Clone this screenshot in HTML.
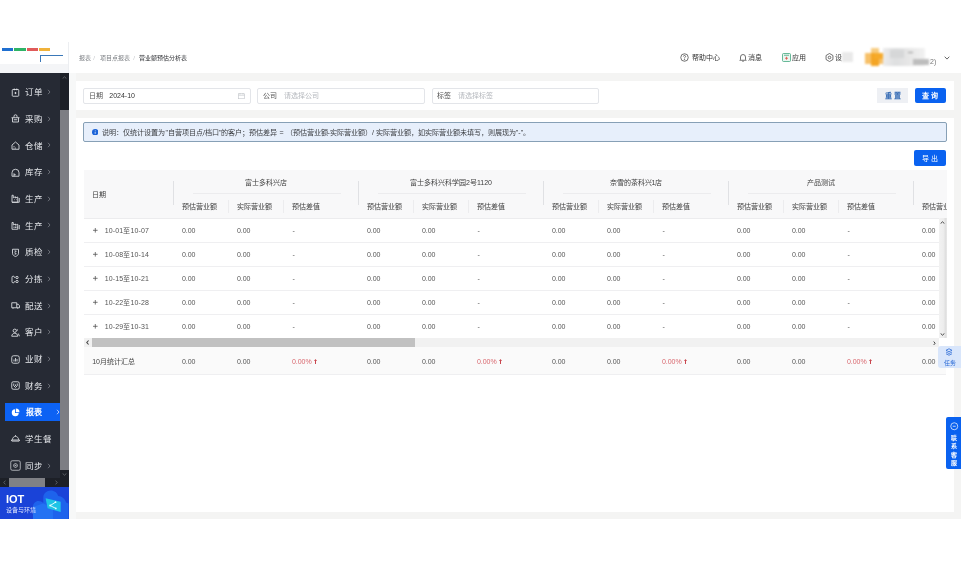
<!DOCTYPE html>
<html lang="zh-CN"><head><meta charset="utf-8">
<style>
*{box-sizing:border-box;margin:0;padding:0}
html,body{width:961px;height:561px;overflow:hidden;background:#fff;-webkit-font-smoothing:antialiased;font-family:"Liberation Sans",sans-serif;}
.abs{position:absolute}
#app{will-change:transform;position:absolute;left:0;top:40px;width:961px;height:479px;background:#f4f4f3;overflow:hidden}
/* header */
#hdr{position:absolute;left:0;top:0;width:961px;height:33px;background:#fff}
#logo{position:absolute;left:0;top:0;width:68px;height:33px;background:#fff}
#side{position:absolute;left:0;top:33px;width:68.5px;height:446px;background:#262a34;overflow:hidden}
.mi{position:absolute;left:0;width:60px;height:18px;color:#e6e8ec;font-size:8px;line-height:18px}
.mi .ic{position:absolute;left:11px;top:4.7px;width:9px;height:9px}
.mi .tx{position:absolute;left:25px;top:0.2px;font-size:8.5px}
.mi.act{left:4.5px;width:55.2px;background:#0c62f4;color:#fff;font-weight:bold}
.mi.act .ic{left:6.5px}
.mi.act .tx{left:21.3px;font-size:8px;top:.5px}
.mi.act .ar{left:51px}
.mi .ar{position:absolute;left:47px;top:6px;width:4px;height:6px}
.bc{top:13px;font-size:6px;line-height:10px;white-space:nowrap}
.hr{top:12.8px;font-size:7px;line-height:10px;color:#333;white-space:nowrap}
.btn{font-size:7px;line-height:15.7px;padding-top:.8px;text-align:center;font-weight:500;white-space:nowrap}
.card{position:absolute;background:#fff}
.inp{position:absolute;top:6.5px;height:16px;border:1px solid #e3e5e9;border-radius:2px;font-size:7px;line-height:14px;color:#444}
.inp .lb{position:absolute;left:4.6px;top:.9px;color:#555}
.inp .ph{position:absolute;top:.9px;color:#b5b8bd}
.th{position:absolute;font-size:7px;color:#3c3c3c;line-height:10px;white-space:nowrap;margin-top:.9px}
.td{position:absolute;font-size:7px;color:#555;line-height:10px;white-space:nowrap;margin-top:.9px}
</style></head>
<body>
<div id="app">
  <div id="hdr">
    <div id="logo">
      <div class="abs" style="left:2px;top:7.5px;width:11.3px;height:3.4px;background:#1f6fd0"></div>
      <div class="abs" style="left:13.8px;top:7.5px;width:12px;height:3.4px;background:#2fb366"></div>
      <div class="abs" style="left:26.6px;top:7.5px;width:11.3px;height:3.4px;background:#e05a5a"></div>
      <div class="abs" style="left:38.6px;top:7.5px;width:11.7px;height:3.4px;background:#f0b23a"></div>
      <div class="abs" style="left:40px;top:15px;width:22.6px;height:1.4px;background:#3a78b8"></div>
      <div class="abs" style="left:40px;top:15px;width:1.4px;height:7px;background:#3a78b8"></div>
      <div class="abs" style="left:0;top:24.4px;width:68px;height:8.6px;background:#f4f5f7"></div>
    </div>
    <div class="abs" style="left:68px;top:2px;width:1px;height:31px;background:#eceef1"></div>
    <span class="abs bc" style="left:79px;color:#7d8085">报表</span>
    <span class="abs bc" style="left:93.2px;color:#c4c6ca">/</span>
    <span class="abs bc" style="left:99.6px;color:#7d8085">项目点报表</span>
    <span class="abs bc" style="left:133.2px;color:#c4c6ca">/</span>
    <span class="abs bc" style="left:139px;color:#303236">营业额预估分析表</span>
    <svg class="abs" style="left:679.5px;top:12.5px;width:9px;height:9px" viewBox="0 0 18 18" fill="none" stroke="#444" stroke-width="1.5"><circle cx="9" cy="9" r="7.5"/><path d="M6.8 7a2.2 2.2 0 1 1 3.2 2c-.7.4-1 .8-1 1.6" /><circle cx="9" cy="13.2" r=".5" fill="#444"/></svg>
    <span class="abs hr" style="left:691.5px">帮助中心</span>
    <svg class="abs" style="left:738.5px;top:12.5px;width:8px;height:9px" viewBox="0 0 16 18" fill="none" stroke="#444" stroke-width="1.5"><path d="M3 13V8a5 5 0 0 1 10 0v5l1.5 1.5h-13z"/><path d="M6.5 16.5h3"/></svg>
    <span class="abs hr" style="left:748px">消息</span>
    <svg class="abs" style="left:781.5px;top:12.5px;width:9px;height:9px" viewBox="0 0 18 18"><rect x="1" y="1" width="16" height="16" rx="2" fill="#eaf7f1" stroke="#3aa37a" stroke-width="1.5"/><path d="M4 4.5h10" stroke="#3aa37a" stroke-width="1.5"/><path d="M9 7.5v6M6 10.5h6" stroke="#e0504a" stroke-width="1.6"/></svg>
    <span class="abs hr" style="left:791.5px">应用</span>
    <svg class="abs" style="left:824.5px;top:12.5px;width:9px;height:9px" viewBox="0 0 18 18" fill="none" stroke="#444" stroke-width="1.5"><path d="M9 1l6.9 4v8L9 17l-6.9-4V5z"/><circle cx="9" cy="9" r="2.6"/></svg>
    <span class="abs hr" style="left:834.5px">设</span>
    <div class="abs" style="left:842px;top:12px;width:11px;height:10px;background:#e4e4e4;opacity:.8;filter:blur(1.2px)"></div>
    <div class="abs" style="left:860px;top:6px;width:72px;height:22px;filter:blur(.9px)">
      <div class="abs" style="left:23px;top:1.5px;width:42px;height:18px;background:linear-gradient(90deg,#ececec,#dedfe0 30%,#e6e6e6 60%,#f2f2f2)"></div>
      <div class="abs" style="left:30px;top:4px;width:14px;height:8px;background:#d6d7d8"></div>
      <div class="abs" style="left:48px;top:5.5px;width:5px;height:1.5px;background:#9a9a9a"></div>
      <div class="abs" style="left:53px;top:13px;width:16px;height:6px;background:#bdbdbd"></div>
      <div class="abs" style="left:10.8px;top:1.75px;width:8.2px;height:18px;background:#f8cc80"></div>
      <div class="abs" style="left:5.4px;top:7.2px;width:18px;height:10.8px;background:#f7c068"></div>
      <div class="abs" style="left:10.8px;top:7.2px;width:8.2px;height:12.5px;background:#f4a524"></div>
      <div class="abs" style="left:14px;top:7px;width:9px;height:6px;background:#f6aa2a"></div>
    </div>
    <span class="abs hr" style="left:930px;top:17px;color:#777">2)</span>
    <svg class="abs" style="left:943.5px;top:15.5px;width:6px;height:4px" viewBox="0 0 6 4" fill="none" stroke="#555" stroke-width=".9"><path d="M.7 .7L3 3.1 5.3 .7"/></svg>

  </div>
  <div class="abs" style="left:68.5px;top:33px;width:7.5px;height:446px;background:#f7f8f8"></div>
<div id="side">
<div class="mi" style="top:10.00px"><svg class="ic" viewBox="0 0 18 18" fill="none" stroke="#e3e5e8" stroke-width="1.7"><rect x="2.5" y="3" width="13" height="13.5" rx="1.5"/><path d="M6.5 1v3.5M11.5 1v3.5"/><path d="M9 7.5l2.2 2.5L9 12.5 6.8 10z" fill="#e3e5e8" stroke="none"/></svg><span class="tx">订单</span><svg class="ar" viewBox="0 0 4 6"><path d="M1 0.8L3 3 1 5.2" fill="none" stroke="#7d8189" stroke-width=".8"/></svg></div>
<div class="mi" style="top:36.69px"><svg class="ic" viewBox="0 0 18 18" fill="none" stroke="#e3e5e8" stroke-width="1.7"><path d="M1 7.5h16M3 7.5v8.5h12V7.5M6 7.5V4.5a3 3 0 0 1 6 0v3M5.5 11.5h7"/></svg><span class="tx">采购</span><svg class="ar" viewBox="0 0 4 6"><path d="M1 0.8L3 3 1 5.2" fill="none" stroke="#7d8189" stroke-width=".8"/></svg></div>
<div class="mi" style="top:63.38px"><svg class="ic" viewBox="0 0 18 18" fill="none" stroke="#e3e5e8" stroke-width="1.7"><path d="M2 8L9 2l7 6v8.5H2z"/><circle cx="6" cy="11" r="1" fill="#e3e5e8" stroke="none"/><circle cx="6" cy="14" r="1" fill="#e3e5e8" stroke="none"/><circle cx="9" cy="14" r="1" fill="#e3e5e8" stroke="none"/></svg><span class="tx">仓储</span><svg class="ar" viewBox="0 0 4 6"><path d="M1 0.8L3 3 1 5.2" fill="none" stroke="#7d8189" stroke-width=".8"/></svg></div>
<div class="mi" style="top:90.07px"><svg class="ic" viewBox="0 0 18 18" fill="none" stroke="#e3e5e8" stroke-width="1.7"><path d="M2 16.5V9.5a7 7 0 0 1 14 0v7z"/><path d="M6 16.5v-6M6 13.5h3.5"/></svg><span class="tx">库存</span><svg class="ar" viewBox="0 0 4 6"><path d="M1 0.8L3 3 1 5.2" fill="none" stroke="#7d8189" stroke-width=".8"/></svg></div>
<div class="mi" style="top:116.76px"><svg class="ic" viewBox="0 0 18 18" fill="none" stroke="#e3e5e8" stroke-width="1.7"><path d="M2 16.5V2.5h2.5v5l4.5-2v2.5l4.5-2V16.5z" /><path d="M2 16.5h14.5V8"/><circle cx="7" cy="11.5" r=".9" fill="#e3e5e8" stroke="none"/><circle cx="11" cy="11.5" r=".9" fill="#e3e5e8" stroke="none"/></svg><span class="tx">生产</span><svg class="ar" viewBox="0 0 4 6"><path d="M1 0.8L3 3 1 5.2" fill="none" stroke="#7d8189" stroke-width=".8"/></svg></div>
<div class="mi" style="top:143.45px"><svg class="ic" viewBox="0 0 18 18" fill="none" stroke="#e3e5e8" stroke-width="1.7"><path d="M2 16.5V3h2.5v5l4.5-2v2.5l4.5-2V16.5zM16.5 16.5V8"/><path d="M6 11v3M9 11v3M12 11v3"/></svg><span class="tx">生产</span><svg class="ar" viewBox="0 0 4 6"><path d="M1 0.8L3 3 1 5.2" fill="none" stroke="#7d8189" stroke-width=".8"/></svg></div>
<div class="mi" style="top:170.14px"><svg class="ic" viewBox="0 0 18 18" fill="none" stroke="#e3e5e8" stroke-width="1.7"><path d="M3 2.5h12v8c0 3.5-3 5.5-6 6.5-3-1-6-3-6-6.5z"/><path d="M7 6h3.5L8 9l2.5 3H7"/></svg><span class="tx">质检</span><svg class="ar" viewBox="0 0 4 6"><path d="M1 0.8L3 3 1 5.2" fill="none" stroke="#7d8189" stroke-width=".8"/></svg></div>
<div class="mi" style="top:196.83px"><svg class="ic" viewBox="0 0 18 18" fill="none" stroke="#e3e5e8" stroke-width="1.7"><path d="M6 2.5H4a2 2 0 0 0-2 2v9a2 2 0 0 0 2 2h2"/><circle cx="12" cy="5" r="2.3"/><circle cx="12" cy="13" r="2.3"/><path d="M7.5 3v3M7.5 12v3"/></svg><span class="tx">分拣</span><svg class="ar" viewBox="0 0 4 6"><path d="M1 0.8L3 3 1 5.2" fill="none" stroke="#7d8189" stroke-width=".8"/></svg></div>
<div class="mi" style="top:223.52px"><svg class="ic" viewBox="0 0 18 18" fill="none" stroke="#e3e5e8" stroke-width="1.7"><path d="M1.5 3.5h10v10h-10zM11.5 6.5h3l2.5 3v4h-5.5"/><path d="M4 13.5v2M13.5 13.5v2"/></svg><span class="tx">配送</span><svg class="ar" viewBox="0 0 4 6"><path d="M1 0.8L3 3 1 5.2" fill="none" stroke="#7d8189" stroke-width=".8"/></svg></div>
<div class="mi" style="top:250.21px"><svg class="ic" viewBox="0 0 18 18" fill="none" stroke="#e3e5e8" stroke-width="1.7"><circle cx="7.5" cy="5.5" r="3.3"/><path d="M1.5 16.5c0-3.5 2.5-6 6-6s6 2.5 6 6z"/><path d="M12.5 2.5v3M14.5 11l2.5 5.5"/></svg><span class="tx">客户</span><svg class="ar" viewBox="0 0 4 6"><path d="M1 0.8L3 3 1 5.2" fill="none" stroke="#7d8189" stroke-width=".8"/></svg></div>
<div class="mi" style="top:276.90px"><svg class="ic" viewBox="0 0 18 18" fill="none" stroke="#e3e5e8" stroke-width="1.7"><rect x="1.5" y="1.5" width="15" height="15" rx="3.5"/><path d="M6 13V9M9 13V6M12 13V8"/></svg><span class="tx">业财</span><svg class="ar" viewBox="0 0 4 6"><path d="M1 0.8L3 3 1 5.2" fill="none" stroke="#7d8189" stroke-width=".8"/></svg></div>
<div class="mi" style="top:303.59px"><svg class="ic" viewBox="0 0 18 18" fill="none" stroke="#e3e5e8" stroke-width="1.7"><rect x="1.5" y="1.5" width="15" height="15" rx="3"/><path d="M5.5 5v4.5l3.5 3.5 3.5-3.5V5" /><path d="M9 7v3" /></svg><span class="tx">财务</span><svg class="ar" viewBox="0 0 4 6"><path d="M1 0.8L3 3 1 5.2" fill="none" stroke="#7d8189" stroke-width=".8"/></svg></div>
<div class="mi act" style="top:330.28px"><svg class="ic" viewBox="0 0 18 18" fill="none" stroke="#fff" stroke-width="1.7"><path fill="#fff" stroke="none" d="M8 2.5a7 7 0 1 0 7.5 7.5H8z"/><path fill="#fff" stroke="none" d="M9.6 1v7.4H17A7.4 7.4 0 0 0 9.6 1z"/></svg><span class="tx">报表</span><svg class="ar" viewBox="0 0 4 6"><path d="M1 0.8L3 3 1 5.2" fill="none" stroke="#dfe8ff" stroke-width=".8"/></svg></div>
<div class="mi" style="top:356.97px"><svg class="ic" style="top:3.4px" viewBox="0 0 18 18" fill="none" stroke="#e3e5e8" stroke-width="1.7"><path d="M.8 14h16.4l-1 2.2H1.8z"/><path d="M2.8 13.5C3 9.5 5.7 6.8 9 6.8s6 2.7 6.2 6.7"/><path d="M9 4.2v2.4"/></svg><span class="tx">学生餐</span></div>
<div class="mi" style="top:383.66px"><svg class="ic" style="left:10px;top:3.5px;width:11px;height:11px" viewBox="0 0 22 22" fill="none" stroke="#c9ccd1" stroke-width="1.6"><rect x="1.5" y="1.5" width="19" height="19" rx="3"/><path d="M11 7l3.5 2v4L11 15l-3.5-2V9z"/><circle cx="11" cy="11" r=".8" fill="#c9ccd1"/></svg><span class="tx">同步</span><svg class="ar" viewBox="0 0 4 6"><path d="M1 0.8L3 3 1 5.2" fill="none" stroke="#7d8189" stroke-width=".8"/></svg></div>
<div class="abs" style="left:60px;top:0;width:8.5px;height:405px;background:#1d2027"></div>
<div class="abs" style="left:60px;top:36.5px;width:8.5px;height:360px;background:#7d7e83"></div>
<svg class="abs" style="left:61.5px;top:2.5px;width:5px;height:3px" viewBox="0 0 5 3"><path d="M0.6 2.6L2.5 0.8 4.4 2.6" fill="none" stroke="#6b6e75" stroke-width=".8"/></svg>
<svg class="abs" style="left:61.5px;top:399.5px;width:5px;height:3px" viewBox="0 0 5 3"><path d="M0.6 0.4L2.5 2.2 4.4 0.4" fill="none" stroke="#6b6e75" stroke-width=".8"/></svg>
<div class="abs" style="left:0;top:405px;width:68.5px;height:8.8px;background:#1d2027"></div>
<div class="abs" style="left:9px;top:405px;width:36px;height:8.8px;background:#808186"></div>
<svg class="abs" style="left:3px;top:407px;width:3px;height:5px" viewBox="0 0 3 5"><path d="M2.4 0.6L0.8 2.5 2.4 4.4" fill="none" stroke="#6b6e75" stroke-width=".8"/></svg>
<svg class="abs" style="left:55px;top:407px;width:3px;height:5px" viewBox="0 0 3 5"><path d="M0.6 0.6L2.2 2.5 0.6 4.4" fill="none" stroke="#6b6e75" stroke-width=".8"/></svg>
<div id="iot" class="abs" style="left:0;top:413.8px;width:68.5px;height:32.2px;background:#1a43d8;overflow:hidden">
  <svg class="abs" style="left:0;top:0;width:68.5px;height:32.2px" viewBox="0 0 68.5 32.2">
    <path d="M33 32.2V19.5c0-3 2.5-5.5 5.5-5.5 2 0 3.5.8 4.8 2V10.5c0-4 3.5-7 7.5-7 3.5 0 6.5 2.3 7.3 5.5 3.8.3 7 2.8 8 6.5l2.4 1v15.7z" fill="#1e63ec"/>
    <path d="M33 32.2V20l10-3.5 10 4v11.7z" fill="#2474f4" opacity=".85"/>
    <path d="M45.6 11.2L60.7 14.8V25L47.6 21.3z" fill="#1fc4e6"/>
    <path d="M55.5 15.2L50.2 18.6 55.8 21.4" fill="none" stroke="#d9fbff" stroke-width="1"/>
    <circle cx="50.2" cy="18.6" r="1" fill="#e6fdff"/><circle cx="55.5" cy="15.2" r=".9" fill="#e6fdff"/><circle cx="55.8" cy="21.4" r=".9" fill="#e6fdff"/>
  </svg>
  <div class="abs" style="left:6px;top:6px;font-size:11px;font-weight:bold;color:#fff;line-height:12px;letter-spacing:0">IOT</div>
  <div class="abs" style="left:6px;top:19.5px;font-size:6px;color:#dfe6ff;line-height:8px">设备与环境</div>
</div>
</div>
  <div class="card" style="left:76px;top:41px;width:878px;height:29px">
    <div class="inp" style="left:7.3px;width:168px"><span class="lb">日期</span><span class="abs" style="left:25px;top:.9px;color:#333">2024-10</span>
      <svg class="abs" style="left:154px;top:4px;width:7px;height:6px" viewBox="0 0 14 12" fill="none" stroke="#c0c3c8" stroke-width="1.2"><rect x="1" y="1.5" width="12" height="10"/><path d="M1 4.5h12M4 0v3M10 0v3"/></svg>
    </div>
    <div class="inp" style="left:181.3px;width:167.3px"><span class="lb">公司</span><span class="ph" style="left:25.5px">请选择公司</span></div>
    <div class="inp" style="left:355.5px;width:167.25px"><span class="lb">标签</span><span class="ph" style="left:25.5px">请选择标签</span></div>
    <div class="abs btn" style="left:801.3px;top:6.5px;width:30.5px;height:15.7px;background:#eef0f4;color:#3b6fb6;font-weight:bold">重 置</div>
    <div class="abs btn" style="left:838.7px;top:6.5px;width:31.5px;height:15.7px;background:#0a62f0;color:#fff;border-radius:2px;font-weight:bold">查 询</div>
  </div>
  <div class="card" style="left:76px;top:77.5px;width:878px;height:394px">
<div class="abs" style="left:7.3px;top:4.8px;width:863.5px;height:19.4px;background:#e7effb;border:1px solid #87a0b6;border-radius:2px">
      <svg class="abs" style="left:7.3px;top:5.6px;width:6.4px;height:6.4px" viewBox="0 0 10 10"><circle cx="5" cy="5" r="5" fill="#1b63d8"/><path d="M5 4.3v3.3" stroke="#fff" stroke-width="1.1"/><circle cx="5" cy="2.7" r=".65" fill="#fff"/></svg>
      <span class="abs" style="left:18.2px;top:4.4px;font-size:7.08px;line-height:10px;color:#3a3c40;white-space:nowrap">说明：仅统计设置为"自营项目点/档口"的客户；预估差异 = （预估营业额-实际营业额）/ 实际营业额，如实际营业额未填写，则展现为"-"。</span>
    </div>
<div class="abs btn" style="left:837.75px;top:32.8px;width:32.25px;height:15.3px;line-height:15.3px;background:#0a62f0;color:#fff;border-radius:2px">导 出</div>
<div class="abs" style="left:0;top:0;width:870.5px;height:300px;overflow:hidden">
<div class="abs" style="left:7.5px;top:52.8px;width:863px;height:48.6px;background:#f8f8f9;border-bottom:1px solid #ececee"></div>
<span class="th" style="left:15.799999999999997px;top:71.8px">日期</span>
<div class="abs" style="left:97.00px;top:63.3px;width:.8px;height:24.6px;background:#e0e1e4"></div>
<div class="th" style="left:97.5px;top:59.3px;width:185px;text-align:center">富士多科兴店</div>
<div class="abs" style="left:116.5px;top:75.80000000000001px;width:148px;height:.8px;background:#ececee"></div>
<span class="th" style="left:105.9px;top:83.8px">预估营业额</span>
<div class="abs" style="left:152.00px;top:82.5px;width:.8px;height:12.5px;background:#ececee"></div>
<span class="th" style="left:160.9px;top:83.8px">实际营业额</span>
<div class="abs" style="left:207.00px;top:82.5px;width:.8px;height:12.5px;background:#ececee"></div>
<span class="th" style="left:215.9px;top:83.8px">预估差值</span>
<div class="abs" style="left:282.00px;top:63.3px;width:.8px;height:24.6px;background:#e0e1e4"></div>
<div class="th" style="left:282.5px;top:59.3px;width:185px;text-align:center">富士多科兴科学园2号1120</div>
<div class="abs" style="left:301.5px;top:75.80000000000001px;width:148px;height:.8px;background:#ececee"></div>
<span class="th" style="left:290.9px;top:83.8px">预估营业额</span>
<div class="abs" style="left:337.00px;top:82.5px;width:.8px;height:12.5px;background:#ececee"></div>
<span class="th" style="left:345.9px;top:83.8px">实际营业额</span>
<div class="abs" style="left:392.00px;top:82.5px;width:.8px;height:12.5px;background:#ececee"></div>
<span class="th" style="left:400.9px;top:83.8px">预估差值</span>
<div class="abs" style="left:467.00px;top:63.3px;width:.8px;height:24.6px;background:#e0e1e4"></div>
<div class="th" style="left:467.5px;top:59.3px;width:185px;text-align:center">奈雪的茶科兴1店</div>
<div class="abs" style="left:486.5px;top:75.80000000000001px;width:148px;height:.8px;background:#ececee"></div>
<span class="th" style="left:475.9px;top:83.8px">预估营业额</span>
<div class="abs" style="left:522.00px;top:82.5px;width:.8px;height:12.5px;background:#ececee"></div>
<span class="th" style="left:530.9px;top:83.8px">实际营业额</span>
<div class="abs" style="left:577.00px;top:82.5px;width:.8px;height:12.5px;background:#ececee"></div>
<span class="th" style="left:585.9px;top:83.8px">预估差值</span>
<div class="abs" style="left:652.00px;top:63.3px;width:.8px;height:24.6px;background:#e0e1e4"></div>
<div class="th" style="left:652.5px;top:59.3px;width:185px;text-align:center">产品测试</div>
<div class="abs" style="left:671.5px;top:75.80000000000001px;width:148px;height:.8px;background:#ececee"></div>
<span class="th" style="left:660.9px;top:83.8px">预估营业额</span>
<div class="abs" style="left:707.00px;top:82.5px;width:.8px;height:12.5px;background:#ececee"></div>
<span class="th" style="left:715.9px;top:83.8px">实际营业额</span>
<div class="abs" style="left:762.00px;top:82.5px;width:.8px;height:12.5px;background:#ececee"></div>
<span class="th" style="left:770.9px;top:83.8px">预估差值</span>
<div class="abs" style="left:837.00px;top:63.3px;width:.8px;height:24.6px;background:#e0e1e4"></div>
<span class="th" style="left:845.9px;top:83.8px">预估营业额</span>
<div class="abs" style="left:892.00px;top:82.5px;width:.8px;height:12.5px;background:#ececee"></div>
<span class="th" style="left:900.9px;top:83.8px">实际营业额</span>
<div class="abs" style="left:947.00px;top:82.5px;width:.8px;height:12.5px;background:#ececee"></div>
<span class="th" style="left:955.9px;top:83.8px">预估差值</span>
<div class="abs" style="left:7.5px;top:124.10000000000001px;width:855px;height:.8px;background:#efeff1"></div>
<svg class="abs" style="left:17.4px;top:110.70px;width:4.6px;height:4.6px" viewBox="0 0 4.6 4.6"><path d="M2.3 0v4.6M0 2.3h4.6" stroke="#555" stroke-width=".8"/></svg>
<span class="td" style="left:28.700000000000003px;top:107.9px;letter-spacing:.15px">10-01至10-07</span>
<span class="td" style="left:105.9px;top:107.9px">0.00</span>
<span class="td" style="left:160.9px;top:107.9px">0.00</span>
<span class="td" style="left:216.5px;top:107.9px">-</span>
<span class="td" style="left:290.9px;top:107.9px">0.00</span>
<span class="td" style="left:345.9px;top:107.9px">0.00</span>
<span class="td" style="left:401.5px;top:107.9px">-</span>
<span class="td" style="left:475.9px;top:107.9px">0.00</span>
<span class="td" style="left:530.9px;top:107.9px">0.00</span>
<span class="td" style="left:586.5px;top:107.9px">-</span>
<span class="td" style="left:660.9px;top:107.9px">0.00</span>
<span class="td" style="left:715.9px;top:107.9px">0.00</span>
<span class="td" style="left:771.5px;top:107.9px">-</span>
<span class="td" style="left:845.9px;top:107.9px">0.00</span>
<div class="abs" style="left:7.5px;top:148.1px;width:855px;height:.8px;background:#efeff1"></div>
<svg class="abs" style="left:17.4px;top:134.70px;width:4.6px;height:4.6px" viewBox="0 0 4.6 4.6"><path d="M2.3 0v4.6M0 2.3h4.6" stroke="#555" stroke-width=".8"/></svg>
<span class="td" style="left:28.700000000000003px;top:131.9px;letter-spacing:.15px">10-08至10-14</span>
<span class="td" style="left:105.9px;top:131.9px">0.00</span>
<span class="td" style="left:160.9px;top:131.9px">0.00</span>
<span class="td" style="left:216.5px;top:131.9px">-</span>
<span class="td" style="left:290.9px;top:131.9px">0.00</span>
<span class="td" style="left:345.9px;top:131.9px">0.00</span>
<span class="td" style="left:401.5px;top:131.9px">-</span>
<span class="td" style="left:475.9px;top:131.9px">0.00</span>
<span class="td" style="left:530.9px;top:131.9px">0.00</span>
<span class="td" style="left:586.5px;top:131.9px">-</span>
<span class="td" style="left:660.9px;top:131.9px">0.00</span>
<span class="td" style="left:715.9px;top:131.9px">0.00</span>
<span class="td" style="left:771.5px;top:131.9px">-</span>
<span class="td" style="left:845.9px;top:131.9px">0.00</span>
<div class="abs" style="left:7.5px;top:172.1px;width:855px;height:.8px;background:#efeff1"></div>
<svg class="abs" style="left:17.4px;top:158.70px;width:4.6px;height:4.6px" viewBox="0 0 4.6 4.6"><path d="M2.3 0v4.6M0 2.3h4.6" stroke="#555" stroke-width=".8"/></svg>
<span class="td" style="left:28.700000000000003px;top:155.9px;letter-spacing:.15px">10-15至10-21</span>
<span class="td" style="left:105.9px;top:155.9px">0.00</span>
<span class="td" style="left:160.9px;top:155.9px">0.00</span>
<span class="td" style="left:216.5px;top:155.9px">-</span>
<span class="td" style="left:290.9px;top:155.9px">0.00</span>
<span class="td" style="left:345.9px;top:155.9px">0.00</span>
<span class="td" style="left:401.5px;top:155.9px">-</span>
<span class="td" style="left:475.9px;top:155.9px">0.00</span>
<span class="td" style="left:530.9px;top:155.9px">0.00</span>
<span class="td" style="left:586.5px;top:155.9px">-</span>
<span class="td" style="left:660.9px;top:155.9px">0.00</span>
<span class="td" style="left:715.9px;top:155.9px">0.00</span>
<span class="td" style="left:771.5px;top:155.9px">-</span>
<span class="td" style="left:845.9px;top:155.9px">0.00</span>
<div class="abs" style="left:7.5px;top:196.1px;width:855px;height:.8px;background:#efeff1"></div>
<svg class="abs" style="left:17.4px;top:182.70px;width:4.6px;height:4.6px" viewBox="0 0 4.6 4.6"><path d="M2.3 0v4.6M0 2.3h4.6" stroke="#555" stroke-width=".8"/></svg>
<span class="td" style="left:28.700000000000003px;top:179.9px;letter-spacing:.15px">10-22至10-28</span>
<span class="td" style="left:105.9px;top:179.9px">0.00</span>
<span class="td" style="left:160.9px;top:179.9px">0.00</span>
<span class="td" style="left:216.5px;top:179.9px">-</span>
<span class="td" style="left:290.9px;top:179.9px">0.00</span>
<span class="td" style="left:345.9px;top:179.9px">0.00</span>
<span class="td" style="left:401.5px;top:179.9px">-</span>
<span class="td" style="left:475.9px;top:179.9px">0.00</span>
<span class="td" style="left:530.9px;top:179.9px">0.00</span>
<span class="td" style="left:586.5px;top:179.9px">-</span>
<span class="td" style="left:660.9px;top:179.9px">0.00</span>
<span class="td" style="left:715.9px;top:179.9px">0.00</span>
<span class="td" style="left:771.5px;top:179.9px">-</span>
<span class="td" style="left:845.9px;top:179.9px">0.00</span>
<div class="abs" style="left:7.5px;top:220.1px;width:855px;height:.8px;background:#efeff1"></div>
<svg class="abs" style="left:17.4px;top:206.70px;width:4.6px;height:4.6px" viewBox="0 0 4.6 4.6"><path d="M2.3 0v4.6M0 2.3h4.6" stroke="#555" stroke-width=".8"/></svg>
<span class="td" style="left:28.700000000000003px;top:203.9px;letter-spacing:.15px">10-29至10-31</span>
<span class="td" style="left:105.9px;top:203.9px">0.00</span>
<span class="td" style="left:160.9px;top:203.9px">0.00</span>
<span class="td" style="left:216.5px;top:203.9px">-</span>
<span class="td" style="left:290.9px;top:203.9px">0.00</span>
<span class="td" style="left:345.9px;top:203.9px">0.00</span>
<span class="td" style="left:401.5px;top:203.9px">-</span>
<span class="td" style="left:475.9px;top:203.9px">0.00</span>
<span class="td" style="left:530.9px;top:203.9px">0.00</span>
<span class="td" style="left:586.5px;top:203.9px">-</span>
<span class="td" style="left:660.9px;top:203.9px">0.00</span>
<span class="td" style="left:715.9px;top:203.9px">0.00</span>
<span class="td" style="left:771.5px;top:203.9px">-</span>
<span class="td" style="left:845.9px;top:203.9px">0.00</span>
<div class="abs" style="left:862.5px;top:100.9px;width:8px;height:119.6px;background:linear-gradient(90deg,#f2f2f2,#ededed 55%,#dedede 85%,#ebebeb)"></div>
<svg class="abs" style="left:864px;top:103.0px;width:5px;height:3px" viewBox="0 0 5 3"><path d="M.6 2.6L2.5 .8 4.4 2.6" fill="none" stroke="#444" stroke-width="1"/></svg>
<svg class="abs" style="left:864px;top:215.5px;width:5px;height:3px" viewBox="0 0 5 3"><path d="M.6 .4L2.5 2.2 4.4 .4" fill="none" stroke="#444" stroke-width="1"/></svg>
<div class="abs" style="left:7.5px;top:220.5px;width:855px;height:9px;background:#f1f1f1"></div>
<div class="abs" style="left:16.200000000000003px;top:220.5px;width:323.2px;height:9px;background:#c1c1c1"></div>
<svg class="abs" style="left:10px;top:222.5px;width:3.2px;height:5px" viewBox="0 0 3 5"><path d="M2.5 .5L.7 2.5 2.5 4.5" fill="none" stroke="#444" stroke-width="1.1"/></svg>
<svg class="abs" style="left:856.5px;top:223.0px;width:3px;height:4.5px" viewBox="0 0 3 5"><path d="M.6 .6L2.2 2.5 .6 4.4" fill="none" stroke="#333" stroke-width="1"/></svg>
<div class="abs" style="left:7.5px;top:229.5px;width:862.1px;height:28.2px;background:#fafafa;border-bottom:1px solid #efeff1"></div>
<span class="td" style="left:16.200000000000003px;top:238.5px;color:#444">10月统计汇总</span>
<span class="td" style="left:105.9px;top:238.5px">0.00</span>
<span class="td" style="left:160.9px;top:238.5px">0.00</span>
<span class="td" style="left:215.9px;top:238.5px;color:#d9676e">0.00%<svg style="margin-left:2px;vertical-align:0" width="3" height="5" viewBox="0 0 3 5"><path d="M1.5 0L3 2H2v3H1V2H0z" fill="#c9464e"/></svg></span>
<span class="td" style="left:290.9px;top:238.5px">0.00</span>
<span class="td" style="left:345.9px;top:238.5px">0.00</span>
<span class="td" style="left:400.9px;top:238.5px;color:#d9676e">0.00%<svg style="margin-left:2px;vertical-align:0" width="3" height="5" viewBox="0 0 3 5"><path d="M1.5 0L3 2H2v3H1V2H0z" fill="#c9464e"/></svg></span>
<span class="td" style="left:475.9px;top:238.5px">0.00</span>
<span class="td" style="left:530.9px;top:238.5px">0.00</span>
<span class="td" style="left:585.9px;top:238.5px;color:#d9676e">0.00%<svg style="margin-left:2px;vertical-align:0" width="3" height="5" viewBox="0 0 3 5"><path d="M1.5 0L3 2H2v3H1V2H0z" fill="#c9464e"/></svg></span>
<span class="td" style="left:660.9px;top:238.5px">0.00</span>
<span class="td" style="left:715.9px;top:238.5px">0.00</span>
<span class="td" style="left:770.9px;top:238.5px;color:#d9676e">0.00%<svg style="margin-left:2px;vertical-align:0" width="3" height="5" viewBox="0 0 3 5"><path d="M1.5 0L3 2H2v3H1V2H0z" fill="#c9464e"/></svg></span>
<span class="td" style="left:845.9px;top:238.5px">0.00</span>
</div>
</div>
  <div class="abs" style="left:937.5px;top:305.6px;width:23.5px;height:22.4px;background:#d9e6fb;border-radius:3px 0 0 3px">
    <svg class="abs" style="left:7.2px;top:2.8px;width:8px;height:8px" viewBox="0 0 16 16" fill="none" stroke="#2a6ad6" stroke-width="1.5"><path d="M8 1.5l6 3-6 3-6-3z"/><path d="M2 8l6 3 6-3M2 11.5l6 3 6-3"/></svg>
    <span class="abs" style="left:6px;top:13.6px;font-size:6px;line-height:8px;color:#2a6ad6;white-space:nowrap">任务</span>
  </div>
  <div class="abs" style="left:946px;top:377.4px;width:15px;height:51.3px;background:#0a62f0;border-radius:2px 0 0 2px">
    <svg class="abs" style="left:4px;top:5px;width:8.5px;height:8.5px" viewBox="0 0 17 17" fill="none" stroke="#fff" stroke-width="1.4"><circle cx="8.5" cy="8.5" r="7"/><path d="M5.5 8.5h6"/></svg>
    <div class="abs" style="left:4.5px;top:17px;width:7px;font-size:6px;line-height:8.1px;color:#fff;font-weight:bold;text-align:center">联<br>系<br>客<br>服</div>
  </div>

</div>
</body></html>
